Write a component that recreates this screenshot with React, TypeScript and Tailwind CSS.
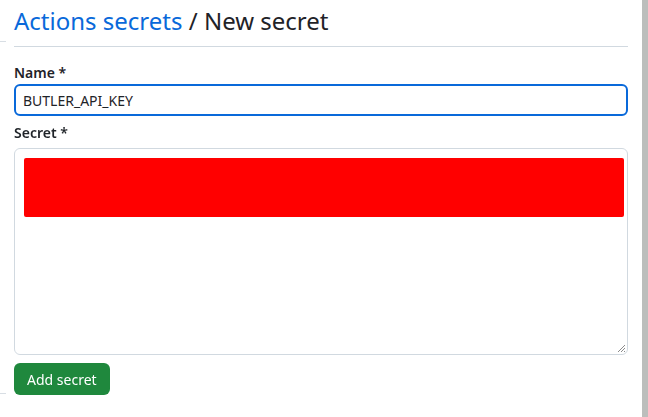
import { useEffect, useRef, useState } from 'react';

export default function App() {
  const [name, setName] = useState('BUTLER_API_KEY');
  const inputRef = useRef<HTMLInputElement>(null);

  useEffect(() => {
    const el = inputRef.current;
    if (el) {
      el.focus();
      el.setSelectionRange(el.value.length, el.value.length);
    }
  }, []);

  return (
    <div className="flex h-[417px] w-[648px] overflow-hidden bg-white font-['Noto_Sans',sans-serif] text-[#1f2328]">
      {/* cut-off sidebar edge */}
      <div className="flex w-[14px] shrink-0 flex-col">
        <div className="mt-[41px] h-px w-[6px] bg-[#d8dee4]" />
        <div className="mt-[351px] h-px w-[6px] bg-[#d8dee4]" />
      </div>

      <div className="w-[614px] shrink-0">
        <div className="border-b border-[#d1d9e0] pb-[8px] pt-[4px]">
          <h2 className="text-[24px] leading-[34px]">
            <a href="#" className="text-[#0969da]">Actions secrets</a>
            <span> / New secret</span>
          </h2>
        </div>

        <form className="pt-[16px]">
          <label className="block text-[14px] font-semibold leading-[20px]">Name *</label>
          <input
            ref={inputRef}
            value={name}
            onChange={(e) => setName(e.target.value)}
            className="mt-[1px] block h-[32px] w-[614px] rounded-[6px] border-2 border-[#0969da] px-[7px] text-[14px] text-[#1f2328] caret-[#1f2328] outline-none"
          />

          <label className="mt-[7px] block text-[14px] font-semibold leading-[20px]">Secret *</label>
          <div className="relative mt-[5px] h-[207px] w-[614px] rounded-[6px] border border-[#d1d9e0] pb-[9px] pl-[9px] pr-[3px] pt-[9px]">
            <div className="h-[59px] rounded-[2px] bg-[#ff0000]" />
            <svg className="absolute bottom-[1px] right-[1px]" width="10" height="10" viewBox="0 0 10 10">
              <path d="M9 2 L2 9 M9 5 L5 9 M9 8 L8 9" stroke="#8c8c8c" strokeWidth="1" />
            </svg>
          </div>

          <button
            type="button"
            className="mt-[8px] h-[32px] rounded-[6px] bg-[#1f883d] px-[13px] text-[14px] font-normal text-white"
          >
            Add secret
          </button>
        </form>
      </div>

      <div className="w-[14px] shrink-0" />
      <div className="w-[6px] shrink-0 bg-[#bcbebc]" />
    </div>
  );
}
